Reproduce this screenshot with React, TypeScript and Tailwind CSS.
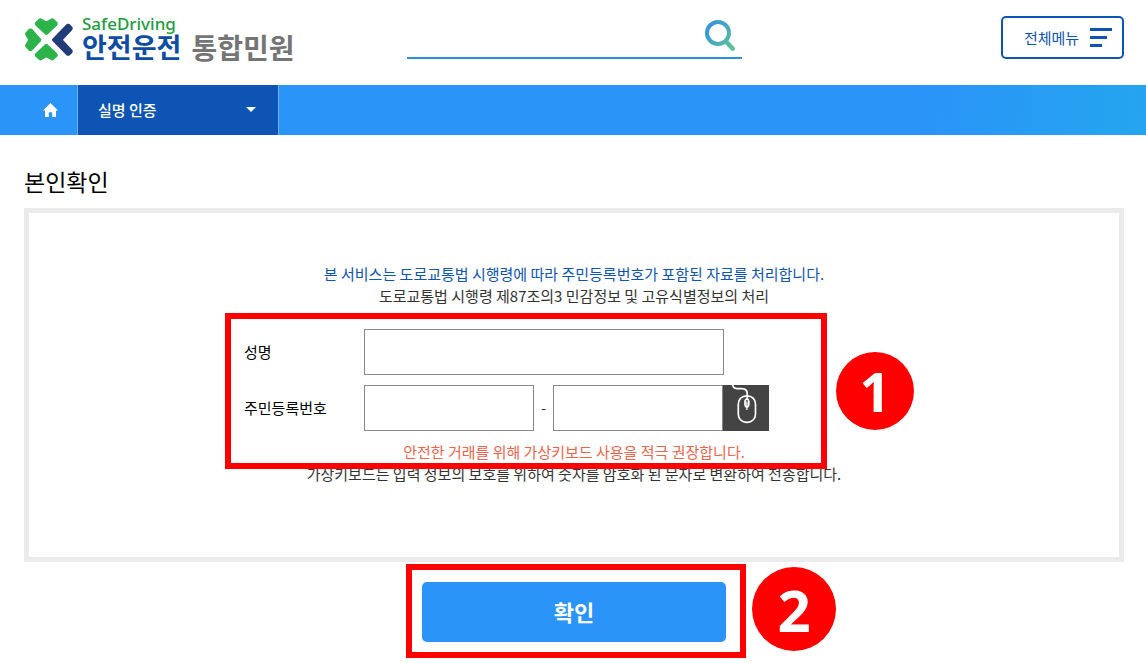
import React, { useState } from 'react';

const CloverLogo = () => (
  <svg viewBox="12 16 150 134" className="w-[50px] h-[45px] shrink-0 mt-px" strokeWidth={10} strokeLinejoin="round" aria-hidden="true">
    <g fill="#2cb34a" stroke="#2cb34a">
      <path d="M61 24 79 34 97 24 108 34V37L79 64 50 37V34Z" />
      <path d="M20 66 30 84 20 102 30 113H33L59 84 33 55H30Z" />
      <path d="M61 141 79 131 97 141 108 131V128L79 101 50 128V131Z" />
    </g>
    <path d="M101 84 143 41H146L153 48V51L122 84 153 117V120L146 127H143Z" fill="#223b79" stroke="#223b79" />
  </svg>
);

const SearchIcon = () => (
  <svg viewBox="0 0 30 31" className="w-[30px] h-[31px]" fill="none" stroke="url(#lens)" aria-hidden="true">
    <defs>
      <linearGradient id="lens" x1="2" y1="6" x2="28" y2="28" gradientUnits="userSpaceOnUse">
        <stop offset="0.1" stopColor="#3b98d6" />
        <stop offset="1" stopColor="#5bc494" />
      </linearGradient>
    </defs>
    <circle cx="13" cy="13" r="11" strokeWidth={4} />
    <path d="M21 21.5 27.7 28.7" strokeWidth={4.4} strokeLinecap="round" />
  </svg>
);

const MouseIcon = () => (
  <svg viewBox="0 0 46 46" className="w-[46px] h-[46px]" fill="none" stroke="#fff" strokeWidth={1.7} aria-hidden="true">
    <path d="M9.8 0C10 2.6 11.5 3.5 14 3.6H19C22.6 3.8 24.2 5.6 24.2 8.5V14" />
    <rect x="15.3" y="10.8" width="17.2" height="26.6" rx="8.2" />
    <ellipse cx="23.9" cy="18" rx="2" ry="4" />
    <path d="M23.9 16.5V25" strokeWidth={1.3} />
  </svg>
);

interface StepBadgeProps {
  step: number;
  className: string;
}

const StepBadge: React.FC<StepBadgeProps> = ({ step, className }) => (
  <span
    className={`absolute flex items-center justify-center rounded-full bg-[#ff0000] text-white font-bold font-['Open_Sans',sans-serif] pointer-events-none ${className}`}
  >
    {step}
  </span>
);

const Header = () => (
  <header className="grid grid-cols-[1fr_335px_1fr] items-start pt-4 pb-[26px] pl-6 pr-[22px]">
    <a href="#" className="flex items-start gap-2 h-[43px]">
      <CloverLogo />
      <span className="flex flex-col whitespace-nowrap">
        <span className="text-[17px] leading-4 font-medium text-[#1b9e3e] font-['Noto_Sans',sans-serif]">SafeDriving</span>
        <span className="flex gap-[10px] leading-[30px] font-bold">
          <span className="text-[27px] text-[#0d4da5]">안전운전</span>
          <span className="text-[28px] text-[#757575]">통합민원</span>
        </span>
      </span>
    </a>
    <form className="flex items-start h-[43px] pt-1 pr-[7px] border-b-2 border-[#2b8fe6]" onSubmit={e => e.preventDefault()}>
      <input type="search" aria-label="검색" className="flex-1 min-w-0 h-9 px-2 outline-none" />
      <button type="submit" aria-label="검색하기">
        <SearchIcon />
      </button>
    </form>
    <button
      type="button"
      className="justify-self-end flex items-center gap-[10px] h-[43px] pl-5 pr-[10px] border-2 border-[#0d54b4] rounded-[5px] text-[15px] text-[#0d54b4]"
    >
      <span className="w-[57px] pt-[2px] whitespace-nowrap">전체메뉴</span>
      <span className="flex flex-col gap-[5px]">
        <span className="w-[22px] h-[3px] bg-[#0d54b4]" />
        <span className="w-[17px] h-[3px] bg-[#0d54b4]" />
        <span className="w-3 h-[3px] bg-[#0d54b4]" />
      </span>
    </button>
  </header>
);

const Breadcrumb = () => (
  <nav className="flex h-[50px] bg-linear-100 from-[#2a94f8] from-80% to-[#24a5ef]">
    <a href="#" aria-label="홈" className="flex items-center justify-end w-[77px] pr-[19px]">
      <svg viewBox="0 0 15 14" className="w-[15px] h-[14px]" fill="#fff" aria-hidden="true">
        <path d="M7.5 0 15 7.4H13V14H9.2V9.3H5.8V14H2V7.4H0Z" />
      </svg>
    </a>
    <div className="relative w-[202px] border-x border-[#6cb5fa]">
      <select
        aria-label="메뉴 선택"
        className="appearance-none w-full h-full px-5 bg-[#0d54b4] text-white text-[15px] font-medium"
      >
        <option>실명 인증</option>
      </select>
      <svg viewBox="0 0 10 5" className="absolute right-[22px] top-[22px] w-[10px] h-[5px] pointer-events-none" fill="#fff" aria-hidden="true">
        <path d="M0 0H10L5 5Z" />
      </svg>
    </div>
  </nav>
);

const App: React.FC = () => {
  const [name, setName] = useState('');
  const [front, setFront] = useState('');
  const [back, setBack] = useState('');

  const fieldClass = 'h-[46px] px-3 border border-[#888888] bg-white outline-none';

  return (
    <div className="bg-white text-black font-['Noto_Sans_CJK_KR',sans-serif]">
      <Header />
      <Breadcrumb />
      <main className="pl-6 pr-[22px] pt-[30px] pb-5">
        <h1 className="text-[23px] leading-8">본인확인</h1>
        <form onSubmit={e => e.preventDefault()}>
          <section className="mt-[11px] pt-[50px] pb-[72px] border-[5px] border-[#ebebeb] text-[15px] leading-[22px] text-[#333333]">
            <p className="text-center text-[#0d54b4]">본 서비스는 도로교통법 시행령에 따라 주민등록번호가 포함된 자료를 처리합니다.</p>
            <p className="text-center">도로교통법 시행령 제87조의3 민감정보 및 고유식별정보의 처리</p>

            <div className="relative flex flex-col gap-[10px] w-[660px] mx-auto mt-[22px] mb-[10px]">
              <div className="flex items-center">
                <label htmlFor="name" className="w-[120px] text-black">성명</label>
                <input id="name" type="text" value={name} onChange={e => setName(e.target.value)} className={`w-[360px] ${fieldClass}`} />
              </div>
              <div className="flex items-center">
                <label htmlFor="front" className="w-[120px] text-black">주민등록번호</label>
                <input id="front" type="text" maxLength={6} value={front} onChange={e => setFront(e.target.value)} className={`w-[170px] ${fieldClass}`} />
                <span className="w-[19px] text-center">-</span>
                <input
                  type="password"
                  aria-label="주민등록번호 뒷자리"
                  maxLength={7}
                  value={back}
                  onChange={e => setBack(e.target.value)}
                  className={`w-[170px] ${fieldClass}`}
                />
                <button type="button" aria-label="가상키보드" className="bg-[#444444]">
                  <MouseIcon />
                </button>
              </div>
              {/* 1단계 강조 표시 */}
              <div className="absolute -left-[19px] -top-4 w-[602px] h-[156px] border-6 border-[#ff0000] pointer-events-none" />
              <StepBadge step={1} className="left-[592px] top-[23px] size-[78px] text-[54px]" />
            </div>

            <p className="text-center text-[#f0644b]">안전한 거래를 위해 가상키보드 사용을 적극 권장합니다.</p>
            <p className="text-center">가상키보드는 입력 정보의 보호를 위하여 숫자를 암호화 된 문자로 변환하여 전송합니다.</p>
          </section>

          <div className="relative w-[304px] mx-auto mt-5">
            <button type="submit" className="w-full h-[60px] pb-[2px] rounded-[5px] bg-[#2a94f8] text-white text-[22px] font-bold">
              확인
            </button>
            {/* 2단계 강조 표시 */}
            <div className="absolute -left-4 -top-[18px] w-[340px] h-[94px] border-6 border-[#ff0000] pointer-events-none" />
            <StepBadge step={2} className="left-[330px] -top-[15px] size-[84px] text-[58px]" />
          </div>
        </form>
      </main>
    </div>
  );
};

export default App;
